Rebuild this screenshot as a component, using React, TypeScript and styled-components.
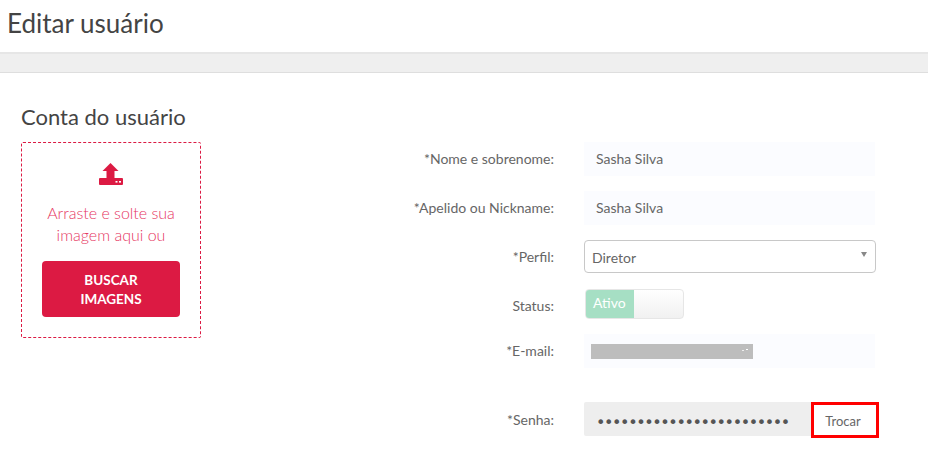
import React from 'react';
import styled, { createGlobalStyle } from 'styled-components';

const GlobalStyle = createGlobalStyle`
  html, body {
    margin: 0;
    padding: 0;
    background: #fff;
    font-family: Lato, "Liberation Sans", sans-serif;
    color: #555;
  }
`;

const Page = styled.div`
  width: 928px;
  height: 450px;
  overflow: hidden;
`;

const Header = styled.header`
  height: 52px;
  padding-left: 7px;
  display: flex;
  align-items: flex-start;
`;

const PageTitle = styled.h1`
  margin: 6px 0 0;
  font-size: 26px;
  line-height: 34px;
  font-weight: 400;
  color: #444;
`;

const Band = styled.div`
  height: 21px;
  box-sizing: border-box;
  background: #efefef;
  border-top: 2px solid #e6e6e6;
  border-bottom: 1px solid #dedede;
`;

const Content = styled.main`
  display: flex;
  padding: 30px 0 0 21px;
`;

const AccountColumn = styled.section`
  width: 180px;
`;

const SectionTitle = styled.h2`
  margin: 0 0 12px;
  font-size: 22px;
  line-height: 27px;
  font-weight: 400;
  color: #444;
`;

const DropZone = styled.div`
  height: 196px;
  box-sizing: border-box;
  border: 1px dashed #dc1a43;
  border-radius: 2px;
  padding: 20px 20px 0;
  display: flex;
  flex-direction: column;
  align-items: center;
`;

const DropText = styled.p`
  margin: 17px 0 15px;
  font-size: 16px;
  line-height: 22px;
  font-weight: 300;
  text-align: center;
  color: #e6365f;
`;

const SearchButton = styled.button`
  width: 138px;
  height: 56px;
  border: 0;
  border-radius: 4px;
  background: #dc1a43;
  color: #fff;
  font-family: inherit;
  font-size: 13.5px;
  line-height: 19px;
  font-weight: 700;
  padding: 2px 20px 0;
`;

const Form = styled.form`
  margin: 39px 0 0 203px;
  display: flex;
  flex-direction: column;
`;

const Row = styled.div<{ $mb: number; $h: number }>`
  display: grid;
  grid-template-columns: 150px 292px;
  column-gap: 30px;
  align-items: center;
  height: ${({ $h }) => $h}px;
  margin-bottom: ${({ $mb }) => $mb}px;
`;

const Label = styled.label<{ $shift?: number }>`
  text-align: right;
  font-size: 14px;
  color: #666;
  white-space: nowrap;
  padding-top: ${({ $shift = -1 }) => ($shift > 0 ? $shift * 2 : 0)}px;
  padding-bottom: ${({ $shift = -1 }) => ($shift < 0 ? -$shift * 2 : 0)}px;
`;

const TextField = styled.div`
  height: 34px;
  width: 291px;
  box-sizing: border-box;
  background: #fbfcff;
  padding: 0 0 2px 12px;
  display: flex;
  align-items: center;
  font-size: 14px;
  color: #666;
`;

const EmailField = styled(TextField)`
  padding: 0 0 0 7px;
`;

const Redacted = styled.div`
  position: relative;
  width: 162px;
  height: 15px;
  background: #bdbdbd;

  &::after {
    content: "";
    position: absolute;
    right: 5px;
    top: 5px;
    width: 2px;
    height: 1px;
    background: #fff;
    box-shadow: -4px 1px 0 #eee;
  }
`;

const SelectBox = styled.div`
  height: 33px;
  box-sizing: border-box;
  border: 1px solid #c8c8c8;
  border-radius: 4px;
  padding: 2px 8px 0 7px;
  display: flex;
  align-items: center;
  justify-content: space-between;
  font-size: 14px;
  color: #666;
`;

const Caret = styled.span`
  width: 0;
  height: 0;
  margin: -7px 0 0;
  border-left: 3px solid transparent;
  border-right: 3px solid transparent;
  border-top: 5px solid #888;
`;

const Toggle = styled.div`
  width: 99px;
  height: 30px;
  margin-left: 1px;
  box-sizing: border-box;
  border: 1px solid #e6e6e6;
  border-radius: 4px;
  overflow: hidden;
  display: flex;
  background: linear-gradient(#ffffff, #f1f1f1);
`;

const ToggleOn = styled.span`
  width: 48px;
  background: #a6dfc4;
  color: #fff;
  font-size: 14px;
  line-height: 26px;
  padding-left: 7px;
  box-sizing: border-box;
`;

const PasswordGroup = styled.div`
  display: flex;
  align-items: flex-start;
  height: 36px;
  width: 295px;
`;

const PasswordField = styled.div`
  width: 227px;
  height: 34px;
  box-sizing: border-box;
  background: #eeeeee;
  border-radius: 2px 0 0 2px;
  padding: 6px 0 0 12px;
  display: flex;
  align-items: center;
  font-size: 16px;
  letter-spacing: -1.4px;
  color: #555;
  font-family: "DejaVu Sans", sans-serif;
`;

const ChangeButton = styled.button`
  width: 68px;
  height: 36px;
  box-sizing: border-box;
  border: 3px solid #ff0000;
  background: #fff;
  color: #666;
  font-family: Lato, sans-serif;
  font-size: 13px;
  padding: 1px 4px 0 0;
`;

const UploadIcon = () => (
  <svg width="24" height="22" viewBox="0 0 24 22" fill="#dc1a43">
    <path d="M11.5 0 L19.5 8 H15.5 V15 H7.5 V8 H3.5 Z" />
    <path d="M1 15 H23 a1 1 0 0 1 1 1 V21 a1 1 0 0 1 -1 1 H1 a1 1 0 0 1 -1 -1 V16 a1 1 0 0 1 1 -1 Z" />
    <rect x="16.5" y="18" width="2" height="1.6" fill="#fff" />
    <rect x="20" y="18" width="2" height="1.6" fill="#fff" />
  </svg>
);

export default function App() {
  return (
    <Page>
      <GlobalStyle />
      <Header>
        <PageTitle>Editar usuário</PageTitle>
      </Header>
      <Band />
      <Content>
        <AccountColumn>
          <SectionTitle>Conta do usuário</SectionTitle>
          <DropZone>
            <UploadIcon />
            <DropText>Arraste e solte sua imagem aqui ou</DropText>
            <SearchButton type="button">BUSCAR IMAGENS</SearchButton>
          </DropZone>
        </AccountColumn>
        <Form>
          <Row $h={34} $mb={15}>
            <Label>*Nome e sobrenome:</Label>
            <TextField>Sasha Silva</TextField>
          </Row>
          <Row $h={34} $mb={15}>
            <Label>*Apelido ou Nickname:</Label>
            <TextField>Sasha Silva</TextField>
          </Row>
          <Row $h={33} $mb={16}>
            <Label $shift={0}>*Perfil:</Label>
            <SelectBox>
              Diretor
              <Caret />
            </SelectBox>
          </Row>
          <Row $h={30} $mb={15}>
            <Label $shift={1}>Status:</Label>
            <Toggle>
              <ToggleOn>Ativo</ToggleOn>
            </Toggle>
          </Row>
          <Row $h={34} $mb={34}>
            <Label>*E-mail:</Label>
            <EmailField>
              <Redacted />
            </EmailField>
          </Row>
          <Row $h={36} $mb={0}>
            <Label>*Senha:</Label>
            <PasswordGroup>
              <PasswordField>••••••••••••••••••••••••</PasswordField>
              <ChangeButton type="button">Trocar</ChangeButton>
            </PasswordGroup>
          </Row>
        </Form>
      </Content>
    </Page>
  );
}
